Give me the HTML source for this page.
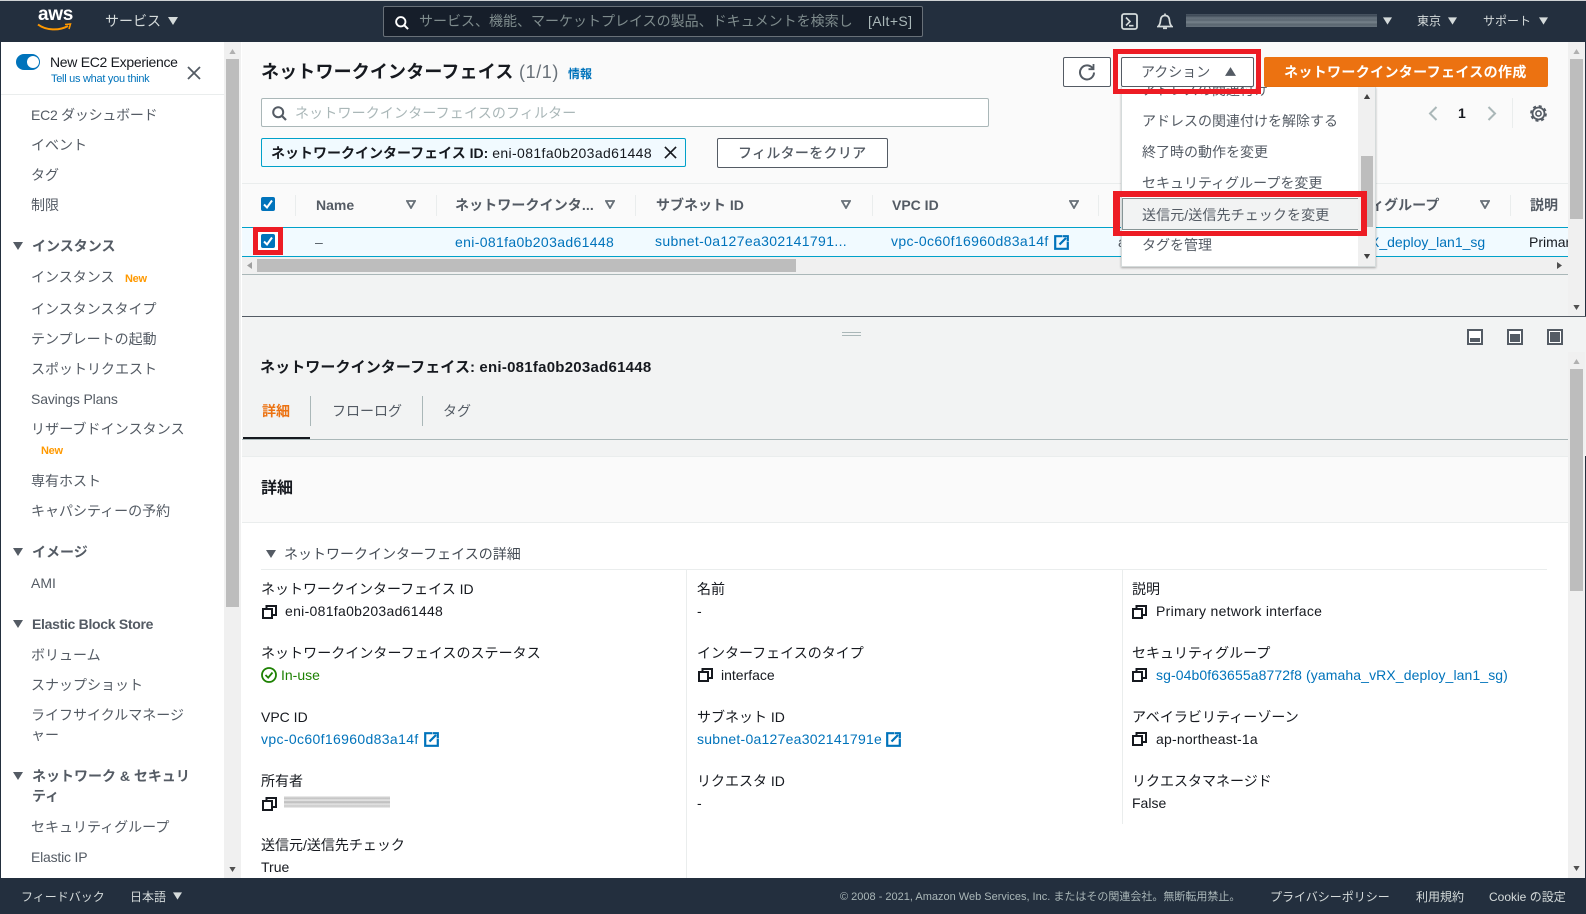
<!DOCTYPE html>
<html lang="ja">
<head>
<meta charset="utf-8">
<title>ネットワークインターフェイス</title>
<style>
html,body{margin:0;padding:0;width:1586px;height:914px;overflow:hidden;background:#fff}
body{position:relative;font-family:"Liberation Sans","Noto Sans CJK JP",sans-serif;font-size:14px;color:#16191f}
.a,.t,svg.i{position:absolute}
.t{white-space:nowrap;line-height:20px;height:20px}
.s{color:#545b64;left:31px}
.b{font-weight:bold}
.h{color:#545b64;font-weight:bold;left:32px}
.l{color:#0073bb}
.f{color:#d5dbdb}
.g{color:#545b64}
.o{color:#ec7211}
.n{color:#ff9900;font-size:11px;font-weight:bold;letter-spacing:-.3px}
.w{color:#16191f}
.sb{background:#f0f0f0}
.th{background:#bdbdbd}
.d{letter-spacing:.35px}
.f12{font-size:12px}
</style>
</head>
<body>
<svg width="0" height="0" style="position:absolute">
<defs>
<symbol id="down" viewBox="0 0 10 8"><path d="M0 0H10L5 8Z" fill="currentColor"/></symbol>
<symbol id="up" viewBox="0 0 10 8"><path d="M0 8H10L5 0Z" fill="currentColor"/></symbol>
<symbol id="filt" viewBox="0 0 10 9"><path d="M1 1H9L5 8Z" fill="#fff" stroke="#687078" stroke-width="1.8"/></symbol>
<symbol id="copy" viewBox="0 0 15 14"><path d="M1 4H10V13H1ZM4.500 4V1H14V10H10" fill="none" stroke="#16191f" stroke-width="2"/></symbol>
<symbol id="ext" viewBox="0 0 15 15"><path d="M8 1.200H1.200V13.800H13.800V7" fill="none" stroke="#0073bb" stroke-width="2.200"/><path d="M5.500 9.500L12 3M8.500 1.200H13.800V6.500" fill="none" stroke="#0073bb" stroke-width="2.200"/></symbol>
<symbol id="mag" viewBox="0 0 15 15"><circle cx="6.200" cy="6.200" r="5" fill="none" stroke="currentColor" stroke-width="2"/><path d="M10 10L14 14" stroke="currentColor" stroke-width="2.200"/></symbol>
<symbol id="x" viewBox="0 0 14 14"><path d="M1 1L13 13M13 1L1 13" stroke="currentColor" stroke-width="1.800" fill="none"/></symbol>
</defs>
</svg>

<!-- header -->
<div class="a" style="left:0;top:0;width:1586px;height:42px;background:#232f3e"></div>
<div class="a" style="left:0;top:0;width:1586px;height:1px;background:#cfd2d4"></div>
<div class="t" style="left:38px;top:5px;color:#fff;font-size:19px;font-weight:bold;letter-spacing:-.3px;line-height:20px">aws</div>
<svg class="i" style="left:37px;top:23px" width="35" height="9" viewBox="0 0 35 9"><path d="M1 1.500C9 7.500 22 8 31 3" fill="none" stroke="#ff9900" stroke-width="2"/><path d="M28 1.500L33.500 1L32 6" fill="none" stroke="#ff9900" stroke-width="1.500"/></svg>
<div class="t f" style="left:105px;top:11px;letter-spacing:0">サービス</div>
<svg class="i" style="left:168px;top:17px;color:#d5dbdb" width="10" height="8"><use href="#down"/></svg>
<div class="a" style="left:383px;top:6px;width:538px;height:29px;background:#161e2a;border:1px solid #687078;border-radius:2px"></div>
<svg class="i" style="left:395px;top:16px;color:#fff" width="14" height="14"><use href="#mag"/></svg>
<div class="a" style="left:419px;top:10px;width:436px;height:22px;overflow:hidden"><div class="t" style="left:0;top:1px;color:#7f8c8d">サービス、機能、マーケットプレイスの製品、ドキュメントを検索します</div></div>
<div class="t" style="left:868px;top:11px;color:#aab7b8;letter-spacing:.4px">[Alt+S]</div>
<svg class="i" style="left:1121px;top:13px" width="17" height="17" viewBox="0 0 17 17"><rect x="1" y="1" width="15" height="15" rx="2" fill="none" stroke="#d5dbdb" stroke-width="1.800"/><path d="M5 4.500L9 8.500L5 12.500M8 12.700H12.500" fill="none" stroke="#d5dbdb" stroke-width="1.600"/></svg>
<svg class="i" style="left:1157px;top:13px" width="16" height="17" viewBox="0 0 16 17"><path d="M1 13.500C3 12 3.300 10 3.500 7.500C3.800 4 5.500 2.500 8 2.500C10.500 2.500 12.200 4 12.500 7.500C12.700 10 13 12 15 13.500Z" fill="none" stroke="#d5dbdb" stroke-width="1.700"/><path d="M8 .5V2.500M6 15.300H10" stroke="#d5dbdb" stroke-width="1.700"/></svg>
<div class="a" style="left:1186px;top:14px;width:191px;height:13px;background:linear-gradient(180deg,#4a5664 0,#3d4956 12%,#66727c 30%,#5c6872 48%,#76828b 62%,#5a6670 80%,#66727c 100%)"></div>
<svg class="i" style="left:1383px;top:17px;color:#d5dbdb" width="9" height="8"><use href="#down"/></svg>
<div class="t f f12" style="left:1417px;top:11px">東京</div>
<svg class="i" style="left:1448px;top:17px;color:#d5dbdb" width="9" height="8"><use href="#down"/></svg>
<div class="t f f12" style="left:1483px;top:11px">サポート</div>
<svg class="i" style="left:1539px;top:17px;color:#d5dbdb" width="9" height="8"><use href="#down"/></svg>

<!-- sidebar -->
<div class="a" style="left:0;top:42px;width:1px;height:872px;background:#232f3e"></div>
<div class="a" style="left:1585px;top:42px;width:1px;height:872px;background:#232f3e"></div>
<div class="a" style="left:16px;top:54px;width:24px;height:16px;border-radius:8px;background:#0073bb"></div>
<div class="a" style="left:27px;top:56px;width:12px;height:12px;border-radius:50%;background:#fff"></div>
<div class="t" style="left:50px;top:52px;color:#16191f;letter-spacing:-.3px">New EC2 Experience</div>
<div class="t l" style="left:51px;top:69px;font-size:11px;letter-spacing:-.28px">Tell us what you think</div>
<svg class="i" style="left:187px;top:66px;color:#545b64" width="14" height="14"><use href="#x"/></svg>
<div class="a" style="left:1px;top:94px;width:223px;height:1px;background:#eaeded"></div>
<div class="t s" style="top:105px;letter-spacing:-.25px">EC2 ダッシュボード</div>
<div class="t s" style="top:135px">イベント</div>
<div class="t s" style="top:165px">タグ</div>
<div class="t s" style="top:195px">制限</div>
<svg class="i" style="left:13px;top:242px;color:#545b64" width="10" height="8"><use href="#down"/></svg>
<div class="t h" style="top:236px">インスタンス</div>
<div class="t s" style="top:267px">インスタンス</div>
<div class="t n" style="left:125px;top:269px">New</div>
<div class="t s" style="top:299px">インスタンスタイプ</div>
<div class="t s" style="top:329px">テンプレートの起動</div>
<div class="t s" style="top:359px">スポットリクエスト</div>
<div class="t s" style="top:389px;letter-spacing:-.15px">Savings Plans</div>
<div class="t s" style="top:419px;letter-spacing:.1px">リザーブドインスタンス</div>
<div class="t n" style="left:41px;top:441px">New</div>
<div class="t s" style="top:471px">専有ホスト</div>
<div class="t s" style="top:501px">キャパシティーの予約</div>
<svg class="i" style="left:13px;top:548px;color:#545b64" width="10" height="8"><use href="#down"/></svg>
<div class="t h" style="top:542px">イメージ</div>
<div class="t s" style="top:573px">AMI</div>
<svg class="i" style="left:13px;top:620px;color:#545b64" width="10" height="8"><use href="#down"/></svg>
<div class="t h" style="top:614px;letter-spacing:-.3px">Elastic Block Store</div>
<div class="t s" style="top:645px">ボリューム</div>
<div class="t s" style="top:675px">スナップショット</div>
<div class="t s" style="top:705px">ライフサイクルマネージ</div>
<div class="t s" style="top:725px">ャー</div>
<svg class="i" style="left:13px;top:772px;color:#545b64" width="10" height="8"><use href="#down"/></svg>
<div class="t h" style="top:766px">ネットワーク &amp; セキュリ</div>
<div class="t h" style="top:786px">ティ</div>
<div class="t s" style="top:817px">セキュリティグループ</div>
<div class="t s" style="top:847px;letter-spacing:-.2px">Elastic IP</div>
<!-- sidebar scrollbar -->
<div class="a sb" style="left:224px;top:42px;width:17px;height:836px"></div>
<div class="a th" style="left:226px;top:59px;width:13px;height:548px"></div>
<svg class="i" style="left:229px;top:49px;color:#b0b0b0" width="7" height="5"><use href="#up"/></svg>
<svg class="i" style="left:229px;top:867px;color:#505050" width="7" height="5"><use href="#down"/></svg>

<!-- top pane -->
<div class="a" style="left:242px;top:42px;width:1326px;height:274px;background:#fafafa"></div>
<div class="t b" style="left:261px;top:62px;font-size:18px;letter-spacing:.15px">ネットワークインターフェイス</div>
<div class="t" style="left:519px;top:62px;font-size:18px;color:#687078;letter-spacing:.6px">(1/1)</div>
<div class="t l b" style="left:568px;top:64px;font-size:12px">情報</div>
<div class="a" style="left:1063px;top:57px;width:46px;height:28px;background:#fff;border:1px solid #545b64;border-radius:2px"></div>
<svg class="i" style="left:1078px;top:63px" width="18" height="18" viewBox="0 0 18 18"><path d="M14.800 5.500A7 7 0 1 0 16 9.500" fill="none" stroke="#545b64" stroke-width="2"/><path d="M15.500 1V6.200H10.500" fill="none" stroke="#545b64" stroke-width="1.800"/></svg>
<div class="a" style="left:1264px;top:57px;width:284px;height:30px;background:#ec7211;border-radius:2px"></div>
<div class="t b" style="left:1284px;top:62px;color:#fff;letter-spacing:.35px">ネットワークインターフェイスの作成</div>
<!-- filter -->
<div class="a" style="left:261px;top:98px;width:726px;height:27px;background:#fff;border:1px solid #aab7b8;border-radius:2px"></div>
<svg class="i" style="left:272px;top:106px;color:#545b64" width="15" height="15"><use href="#mag"/></svg>
<div class="t" style="left:295px;top:103px;color:#aab7b8;letter-spacing:.15px">ネットワークインターフェイスのフィルター</div>
<div class="a" style="left:261px;top:138px;width:423px;height:27px;background:#f1faff;border:1px solid #00a1c9;border-radius:2px"></div>
<div class="t w" style="left:271px;top:143px"><b>ネットワークインターフェイス ID:</b> <span style="letter-spacing:.38px">eni-081fa0b203ad61448</span></div>
<svg class="i" style="left:664px;top:146px;color:#16191f" width="13" height="13"><use href="#x"/></svg>
<div class="a" style="left:717px;top:138px;width:169px;height:28px;background:#fff;border:1px solid #545b64;border-radius:2px"></div>
<div class="t g" style="left:738px;top:143px;font-weight:500;letter-spacing:.3px">フィルターをクリア</div>
<!-- pagination -->
<svg class="i" style="left:1428px;top:106px" width="10" height="15" viewBox="0 0 10 15"><path d="M8.500 1L2 7.500L8.500 14" fill="none" stroke="#aab7b8" stroke-width="2"/></svg>
<div class="t b" style="left:1458px;top:103px">1</div>
<svg class="i" style="left:1487px;top:106px" width="10" height="15" viewBox="0 0 10 15"><path d="M1.500 1L8 7.500L1.500 14" fill="none" stroke="#aab7b8" stroke-width="2"/></svg>
<div class="a" style="left:1512px;top:98px;width:1px;height:30px;background:#eaeded"></div>
<svg class="i" style="left:1530px;top:105px" width="17" height="17" viewBox="0 0 17 17"><circle cx="8.500" cy="8.500" r="2.600" fill="none" stroke="#545b64" stroke-width="1.600"/><circle cx="8.500" cy="8.500" r="6" fill="none" stroke="#545b64" stroke-width="1.800"/><circle cx="8.500" cy="8.500" r="7.400" fill="none" stroke="#545b64" stroke-width="2" stroke-dasharray="3 2.810"/></svg>

<!-- table -->
<div class="a" style="left:242px;top:183px;width:1326px;height:1px;background:#eaeded"></div>
<div class="a" style="left:261px;top:197px;width:14px;height:14px;background:#0073bb;border-radius:2px"></div>
<svg class="i" style="left:261px;top:197px" width="14" height="14" viewBox="0 0 14 14"><path d="M3 7.500L6 10.500L11 3.500" fill="none" stroke="#fff" stroke-width="2"/></svg>
<div class="a" style="left:295px;top:195px;width:1px;height:21px;background:#eaeded"></div>
<div class="a" style="left:436px;top:195px;width:1px;height:21px;background:#eaeded"></div>
<div class="a" style="left:635px;top:195px;width:1px;height:21px;background:#eaeded"></div>
<div class="a" style="left:872px;top:195px;width:1px;height:21px;background:#eaeded"></div>
<div class="a" style="left:1098px;top:195px;width:1px;height:21px;background:#eaeded"></div>
<div class="a" style="left:1510px;top:195px;width:1px;height:21px;background:#eaeded"></div>
<div class="t g b" style="left:316px;top:195px">Name</div>
<svg class="i" style="left:406px;top:200px" width="10" height="9"><use href="#filt"/></svg>
<div class="t g b" style="left:455px;top:195px;letter-spacing:.1px">ネットワークインタ...</div>
<svg class="i" style="left:605px;top:200px" width="10" height="9"><use href="#filt"/></svg>
<div class="t g b" style="left:656px;top:195px">サブネット ID</div>
<svg class="i" style="left:841px;top:200px" width="10" height="9"><use href="#filt"/></svg>
<div class="t g b" style="left:892px;top:195px">VPC ID</div>
<svg class="i" style="left:1069px;top:200px" width="10" height="9"><use href="#filt"/></svg>
<div class="t g b" style="left:1301px;top:195px">セキュリティグループ</div>
<svg class="i" style="left:1480px;top:200px" width="10" height="9"><use href="#filt"/></svg>
<div class="t g b" style="left:1530px;top:195px">説明</div>
<div class="a" style="left:242px;top:227px;width:1326px;height:28px;background:#f1faff;border-top:1px solid #00a1c9;border-bottom:1px solid #00a1c9"></div>
<div class="t g" style="left:315px;top:232px">–</div>
<div class="t l d" style="left:455px;top:232px">eni-081fa0b203ad61448</div>
<div class="t l d" style="left:655px;top:231px">subnet-0a127ea302141791...</div>
<div class="t l d" style="left:891px;top:231px">vpc-0c60f16960d83a14f</div>
<svg class="i" style="left:1054px;top:235px" width="15" height="15"><use href="#ext"/></svg>
<div class="t g" style="left:1118px;top:232px">a</div>
<div class="t l" style="left:1370px;top:232px">X_deploy_lan1_sg</div>
<div class="a" style="left:1529px;top:230px;width:39px;height:24px;overflow:hidden"><div class="t w" style="left:0;top:2px">Primary</div></div>
<!-- h scroll -->
<div class="a sb" style="left:242px;top:257px;width:1326px;height:17px"></div>
<div class="a th" style="left:257px;top:259px;width:539px;height:13px"></div>
<svg class="i" style="left:247px;top:262px" width="5" height="7" viewBox="0 0 5 7"><path d="M5 0V7L0 3.500Z" fill="#a0a0a0"/></svg>
<svg class="i" style="left:1557px;top:262px" width="5" height="7" viewBox="0 0 5 7"><path d="M0 0V7L5 3.500Z" fill="#505050"/></svg>
<div class="a" style="left:242px;top:274px;width:1326px;height:1px;background:#aab7b8"></div>
<div class="a" style="left:242px;top:275px;width:1326px;height:41px;background:#f2f3f3"></div>
<!-- top pane v scroll -->
<div class="a sb" style="left:1568px;top:42px;width:17px;height:275px"></div>
<div class="a th" style="left:1570px;top:59px;width:13px;height:160px"></div>
<svg class="i" style="left:1573px;top:49px;color:#b0b0b0" width="7" height="5"><use href="#up"/></svg>
<svg class="i" style="left:1573px;top:305px;color:#505050" width="7" height="5"><use href="#down"/></svg>
<div class="a" style="left:242px;top:316px;width:1344px;height:1px;background:#545b64"></div>

<!-- lower pane -->
<div class="a" style="left:242px;top:317px;width:1344px;height:139px;background:#f2f3f3"></div>
<div class="a" style="left:842px;top:332px;width:19px;height:1px;background:#aab7b8"></div>
<div class="a" style="left:842px;top:335px;width:19px;height:1px;background:#aab7b8"></div>
<svg class="i" style="left:1467px;top:329px" width="16" height="16" viewBox="0 0 16 16"><rect x="1" y="1" width="14" height="14" fill="#fff" stroke="#545b64" stroke-width="2"/><rect x="3" y="9" width="10" height="4" fill="#545b64"/></svg>
<svg class="i" style="left:1507px;top:329px" width="16" height="16" viewBox="0 0 16 16"><rect x="1" y="1" width="14" height="14" fill="#fff" stroke="#545b64" stroke-width="2"/><rect x="3" y="5" width="10" height="8" fill="#545b64"/></svg>
<svg class="i" style="left:1547px;top:329px" width="16" height="16" viewBox="0 0 16 16"><rect x="1" y="1" width="14" height="14" fill="#fff" stroke="#545b64" stroke-width="2"/><rect x="3" y="3" width="10" height="10" fill="#545b64"/></svg>
<div class="t b" style="left:260px;top:358px;font-size:15px;letter-spacing:.1px">ネットワークインターフェイス: <span style="letter-spacing:.25px">eni-081fa0b203ad61448</span></div>
<div class="t o b" style="left:262px;top:401px">詳細</div>
<div class="a" style="left:310px;top:396px;width:1px;height:30px;background:#aab7b8"></div>
<div class="t g" style="left:332px;top:401px">フローログ</div>
<div class="a" style="left:422px;top:396px;width:1px;height:30px;background:#aab7b8"></div>
<div class="t g" style="left:443px;top:401px">タグ</div>
<div class="a" style="left:242px;top:439px;width:1326px;height:1px;background:#aab7b8"></div>
<div class="a" style="left:243px;top:437px;width:67px;height:2px;background:#16191f"></div>
<div class="a" style="left:242px;top:456px;width:1326px;height:65px;background:#fafafa;border-top:1px solid #eaeded;border-bottom:1px solid #eaeded"></div>
<div class="a" style="left:242px;top:523px;width:1326px;height:355px;background:#fff"></div>
<div class="t b" style="left:261px;top:479px;font-size:16px">詳細</div>
<svg class="i" style="left:266px;top:550px;color:#545b64" width="10" height="8"><use href="#down"/></svg>
<div class="t" style="left:284px;top:544px;color:#444b54">ネットワークインターフェイスの詳細</div>
<div class="a" style="left:261px;top:569px;width:1286px;height:1px;background:#eaeded"></div>
<div class="a" style="left:686px;top:569px;width:1px;height:309px;background:#eaeded"></div>
<div class="a" style="left:1122px;top:569px;width:1px;height:255px;background:#eaeded"></div>

<div class="t w" style="left:261px;top:579px">ネットワークインターフェイス ID</div>
<svg class="i" style="left:262px;top:605px" width="15" height="14"><use href="#copy"/></svg>
<div class="t w d" style="left:285px;top:601px;letter-spacing:.3px">eni-081fa0b203ad61448</div>
<div class="t w" style="left:261px;top:643px;letter-spacing:.05px">ネットワークインターフェイスのステータス</div>
<svg class="i" style="left:261px;top:667px" width="16" height="16" viewBox="0 0 16 16"><circle cx="8" cy="8" r="7" fill="none" stroke="#1d8102" stroke-width="1.800"/><path d="M4.500 8L7.200 10.700L11.500 5.500" fill="none" stroke="#1d8102" stroke-width="1.800"/></svg>
<div class="t" style="left:281px;top:665px;color:#1d8102">In-use</div>
<div class="t w" style="left:261px;top:707px">VPC ID</div>
<div class="t l d" style="left:261px;top:729px">vpc-0c60f16960d83a14f</div>
<svg class="i" style="left:424px;top:732px" width="15" height="15"><use href="#ext"/></svg>
<div class="t w" style="left:261px;top:771px">所有者</div>
<svg class="i" style="left:262px;top:797px" width="15" height="14"><use href="#copy"/></svg>
<div class="a" style="left:284px;top:796px;width:106px;height:12px;background:linear-gradient(180deg,#f4f4f4 0,#c0c0c0 18%,#e8e8e8 35%,#b8b8b8 50%,#e4e4e4 68%,#c8c8c8 84%,#f2f2f2 100%)"></div>
<div class="t w" style="left:261px;top:835px">送信元/送信先チェック</div>
<div class="t w" style="left:261px;top:857px">True</div>

<div class="t w" style="left:697px;top:579px">名前</div>
<div class="t w" style="left:697px;top:601px">-</div>
<div class="t w" style="left:697px;top:643px">インターフェイスのタイプ</div>
<svg class="i" style="left:698px;top:668px" width="15" height="14"><use href="#copy"/></svg>
<div class="t w" style="left:721px;top:665px">interface</div>
<div class="t w" style="left:697px;top:707px">サブネット ID</div>
<div class="t l" style="left:697px;top:729px;letter-spacing:.25px">subnet-0a127ea302141791e</div>
<svg class="i" style="left:886px;top:732px" width="15" height="15"><use href="#ext"/></svg>
<div class="t w" style="left:697px;top:771px">リクエスタ ID</div>
<div class="t w" style="left:697px;top:793px">-</div>

<div class="t w" style="left:1132px;top:579px">説明</div>
<svg class="i" style="left:1132px;top:605px" width="15" height="14"><use href="#copy"/></svg>
<div class="t w" style="left:1156px;top:601px;letter-spacing:.3px">Primary network interface</div>
<div class="t w" style="left:1132px;top:643px">セキュリティグループ</div>
<svg class="i" style="left:1132px;top:668px" width="15" height="14"><use href="#copy"/></svg>
<div class="t l" style="left:1156px;top:665px;letter-spacing:.1px">sg-04b0f63655a8772f8 (yamaha_vRX_deploy_lan1_sg)</div>
<div class="t w" style="left:1132px;top:707px;letter-spacing:.05px">アベイラビリティーゾーン</div>
<svg class="i" style="left:1132px;top:732px" width="15" height="14"><use href="#copy"/></svg>
<div class="t w" style="left:1156px;top:729px;letter-spacing:.2px">ap-northeast-1a</div>
<div class="t w" style="left:1132px;top:771px">リクエスタマネージド</div>
<div class="t w" style="left:1132px;top:793px">False</div>

<!-- lower scrollbar -->
<div class="a sb" style="left:1568px;top:352px;width:17px;height:526px"></div>
<div class="a th" style="left:1570px;top:369px;width:13px;height:222px"></div>
<svg class="i" style="left:1573px;top:359px;color:#b0b0b0" width="7" height="5"><use href="#up"/></svg>
<svg class="i" style="left:1573px;top:866px;color:#505050" width="7" height="5"><use href="#down"/></svg>

<!-- dropdown -->
<div class="a" style="left:1121px;top:87px;width:253px;height:179px;background:#fff;border:1px solid #d5dbdb;border-top:none;box-shadow:0 1px 2px rgba(0,0,0,.3);overflow:hidden">
  <div class="t" style="left:20px;top:-7px;color:#545b64">アドレスの関連付け</div>
  <div class="t g" style="left:20px;top:24px">アドレスの関連付けを解除する</div>
  <div class="t g" style="left:20px;top:55px">終了時の動作を変更</div>
  <div class="t g" style="left:20px;top:86px">セキュリティグループを変更</div>
  <div class="a" style="left:0;top:111px;width:236px;height:30px;background:#f2f3f3;border:1px solid #879596"></div>
  <div class="t g" style="left:20px;top:118px;letter-spacing:.1px">送信元/送信先チェックを変更</div>
  <div class="t g" style="left:20px;top:148px">タグを管理</div>
  <div class="a sb" style="left:236px;top:0;width:17px;height:179px"></div>
  <div class="a th" style="left:239px;top:69px;width:12px;height:71px"></div>
  <svg class="i" style="left:241px;top:7px;color:#404040" width="8" height="5"><use href="#up"/></svg>
  <svg class="i" style="left:241px;top:167px;color:#404040" width="8" height="5"><use href="#down"/></svg>
</div>
<!-- action button -->
<div class="a" style="left:1121px;top:57px;width:131px;height:28px;background:#fff;border:1px solid #545b64;border-radius:2px"></div>
<div class="t g" style="left:1141px;top:62px">アクション</div>
<svg class="i" style="left:1225px;top:67px;color:#545b64" width="11" height="9"><use href="#up"/></svg>

<!-- red frames -->
<div class="a" style="left:1113px;top:49px;width:138px;height:35px;border:5px solid #ed1c24"></div>
<div class="a" style="left:1113px;top:191px;width:241px;height:34px;border:6px solid #ed1c24;border-bottom-width:5px;border-left-width:7px"></div>
<div class="a" style="left:253px;top:227px;width:20px;height:18px;border:5px solid #ed1c24;background:#fff"></div>
<div class="a" style="left:261px;top:234px;width:14px;height:14px;background:#0073bb;border-radius:2px"></div>
<svg class="i" style="left:261px;top:234px" width="14" height="14" viewBox="0 0 14 14"><path d="M3 7.500L6 10.500L11 3.500" fill="none" stroke="#fff" stroke-width="2"/></svg>

<!-- footer -->
<div class="a" style="left:0;top:878px;width:1586px;height:36px;background:#232f3e"></div>
<div class="t f f12" style="left:21px;top:887px">フィードバック</div>
<div class="t f f12" style="left:130px;top:887px">日本語</div>
<svg class="i" style="left:173px;top:892px;color:#d5dbdb" width="9" height="8"><use href="#down"/></svg>
<div class="t" style="left:840px;top:887px;font-size:11px;color:#aab7b8">© 2008 - 2021, Amazon Web Services, Inc. またはその関連会社。無断転用禁止。</div>
<div class="t f f12" style="left:1270px;top:887px">プライバシーポリシー</div>
<div class="t f f12" style="left:1416px;top:887px">利用規約</div>
<div class="t f f12" style="left:1489px;top:887px">Cookie の設定</div>
</body>
</html>
